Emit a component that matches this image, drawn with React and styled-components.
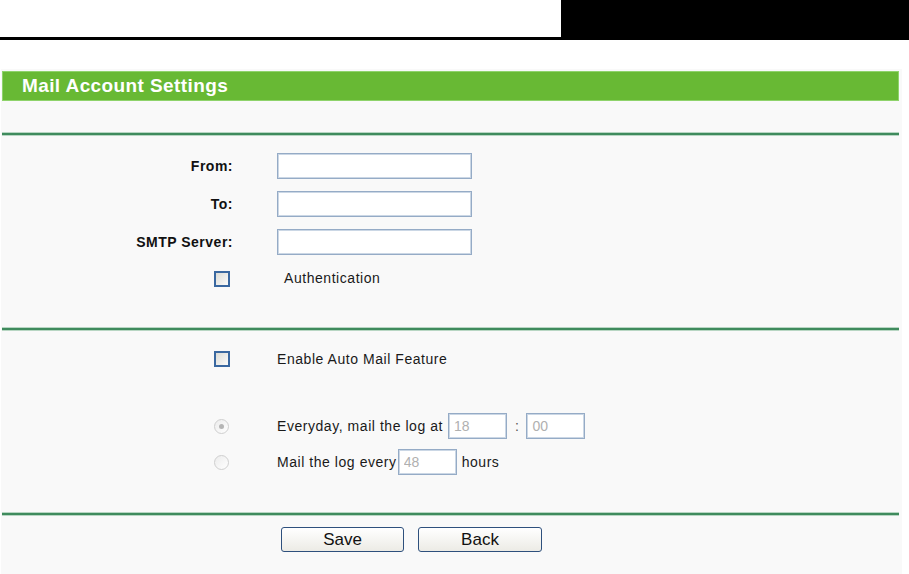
import React from 'react'
import styled, { createGlobalStyle } from 'styled-components'

const Global = createGlobalStyle`
  body {
    margin: 0;
    background: #fff;
    font-family: "Liberation Sans", Arial, sans-serif;
    color: #1a1a1a;
  }
`

const Page = styled.div`
  width: 909px;
  height: 574px;
  overflow: hidden;
`

const TopBar = styled.div`
  display: flex;
  height: 37px;
  border-bottom: 3px solid #000;
`

const TopBlank = styled.div`
  width: 561px;
`

const TopBlock = styled.div`
  flex: 1;
  background: #000;
`

const Panel = styled.div`
  margin: 29px 7px 0 1px;
  padding: 2px 3px 0 1px;
  background: #f9f9f9;
  height: 520px;
`

const Header = styled.div`
  height: 28px;
  border: 1px solid #8fd36b;
  background: #68b934;
  color: #fff;
  font-weight: bold;
  font-size: 19px;
  letter-spacing: 0.4px;
  line-height: 28px;
  padding-left: 19px;
`

const Rule = styled.div`
  height: 2px;
  background: #3f8b5d;
  box-shadow: 0 -1px 0 #b8d6c3, 0 1px 0 #b8d6c3;
  margin-top: ${p => p.$top}px;
`

const Row = styled.div`
  display: grid;
  grid-template-columns: 231px 1fr;
  column-gap: 44px;
  align-items: center;
  height: ${p => p.$h || 38}px;
  margin-top: ${p => p.$top || 0}px;
`

const Label = styled.label`
  text-align: right;
  font-weight: bold;
  font-size: 14px;
  letter-spacing: 0.5px;
  color: #111;
`

const Cell = styled.div`
  display: flex;
  align-items: center;
  justify-content: ${p => (p.$end ? 'flex-end' : 'flex-start')};
  padding-right: ${p => (p.$end ? 3 : 0)}px;
  padding-left: ${p => p.$indent || 0}px;
  padding-bottom: ${p => p.$lift || 0}px;
  font-size: 14px;
  letter-spacing: 0.55px;
  white-space: nowrap;
`

const TextBox = styled.input`
  box-sizing: border-box;
  width: ${p => p.$w || 195}px;
  height: 26px;
  border: 1px solid #95abc6;
  box-shadow: inset 0 0 0 1px #cbd7e5;
  background: #fff;
  padding: 0 5px;
  font-family: inherit;
  font-size: 14px;
  color: #b0b0b0;
  margin: ${p => p.$m || '0'};
  outline: none;
`

const Check = styled.span`
  box-sizing: border-box;
  display: inline-block;
  width: 16px;
  height: 16px;
  border: 2px solid #3a68a0;
  background: linear-gradient(135deg, #dcdcd6, #fbfbfa);
`

const Radio = styled.span`
  box-sizing: border-box;
  position: relative;
  display: inline-block;
  width: 15px;
  height: 15px;
  margin-right: 1px;
  border-radius: 50%;
  border: 1px solid #cfcfcf;
  background: linear-gradient(135deg, #ececec, #fff);

  &::after {
    content: '';
    display: ${p => (p.$on ? 'block' : 'none')};
    position: absolute;
    left: 4px;
    top: 4px;
    width: 5px;
    height: 5px;
    border-radius: 50%;
    background: #b5b5b5;
  }
`

const Colon = styled.span`
  margin: 0 7px 0 8px;
  color: #555;
`

const Buttons = styled.div`
  display: flex;
  gap: 14px;
  padding-left: 279px;
  margin-top: 12px;
`

const Button = styled.button`
  width: ${p => p.$w}px;
  height: 25px;
  border: 1px solid #2e507d;
  border-radius: 3px;
  background: linear-gradient(#ffffff, #ecebe5);
  font-family: inherit;
  font-size: 17px;
  color: #111;
  padding: 0;
`

const App = () => {
  return (
    <Page>
      <Global />
      <TopBar>
        <TopBlank />
        <TopBlock />
      </TopBar>
      <Panel>
        <Header>Mail Account Settings</Header>
        <Rule $top={32} />

        <Row $top={12}>
          <Label>From:</Label>
          <Cell><TextBox /></Cell>
        </Row>
        <Row>
          <Label>To:</Label>
          <Cell><TextBox /></Cell>
        </Row>
        <Row>
          <Label>SMTP Server:</Label>
          <Cell><TextBox /></Cell>
        </Row>
        <Row $h={36}>
          <Cell $end><Check /></Cell>
          <Cell $indent={7} $lift={3}>Authentication</Cell>
        </Row>

        <Rule $top={31} />

        <Row $h={36} $top={11}>
          <Cell $end><Check /></Cell>
          <Cell $lift={1}>Enable Auto Mail Feature</Cell>
        </Row>
        <Row $h={36} $top={31}>
          <Cell $end><Radio $on /></Cell>
          <Cell>
            Everyday, mail the log at
            <TextBox $w={59} $m="0 0 0 5px" defaultValue="18" />
            <Colon>:</Colon>
            <TextBox $w={59} defaultValue="00" />
          </Cell>
        </Row>
        <Row $h={36}>
          <Cell $end><Radio /></Cell>
          <Cell>
            Mail the log every
            <TextBox $w={59} $m="0 5px 0 1px" defaultValue="48" />
            hours
          </Cell>
        </Row>

        <Rule $top={33} />

        <Buttons>
          <Button $w={123}>Save</Button>
          <Button $w={124}>Back</Button>
        </Buttons>
      </Panel>
    </Page>
  )
}

export default App
